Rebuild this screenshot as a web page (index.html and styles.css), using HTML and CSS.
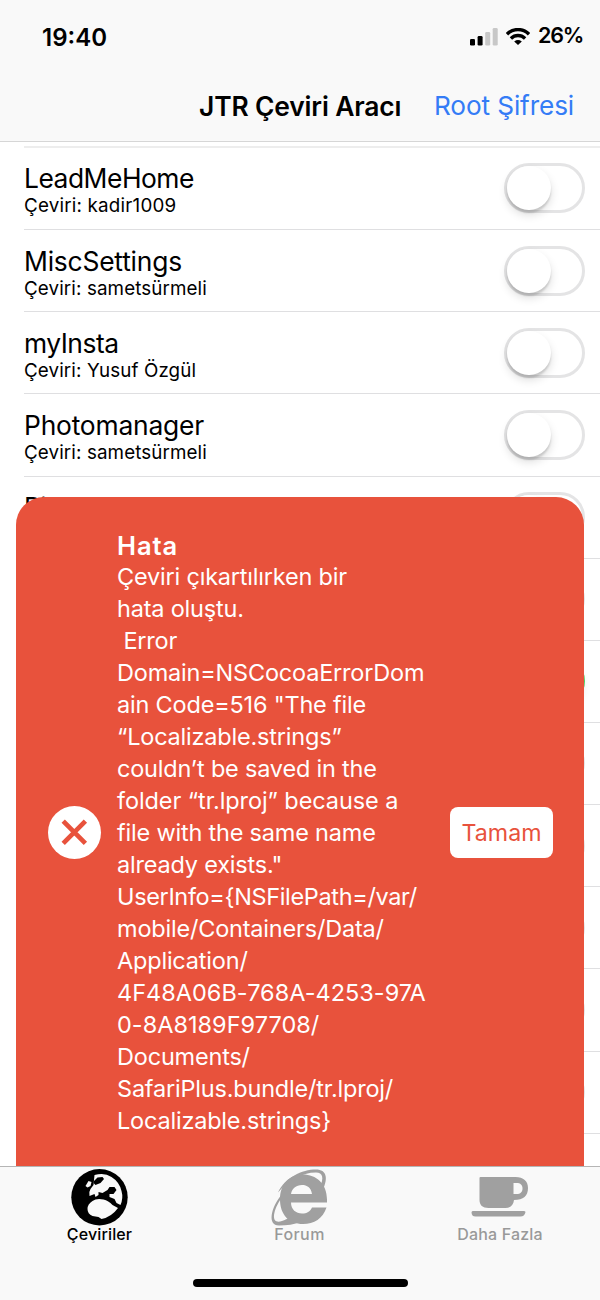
FILE: index.html
```
<!DOCTYPE html>
<html lang="tr">
<head>
<meta charset="utf-8">
<title>JTR Çeviri Aracı</title>
<link rel="stylesheet" href="styles.css">
</head>
<body>
<div class="phone">
  <header class="top">
    <div class="status">
      <span class="time">19:40</span>
      <svg class="signal" viewBox="0 0 28 18"><rect x="0" y="11" width="5" height="6.5" rx="1.3"/><rect x="7.6" y="8" width="5" height="9.5" rx="1.3"/><rect class="weak" x="15.2" y="4" width="5" height="13.5" rx="1.3"/><rect class="weak" x="22.7" y="0" width="5" height="17.5" rx="1.3"/></svg>
      <svg class="wifi" viewBox="0 0 24 17"><g fill="none" stroke="#000" stroke-width="3.4"><path d="M1 6.2C7.2 0 16.800 0 23 6.200"/><path d="M4.900 10.400C9 6.500 15 6.500 19.100 10.400"/></g><path d="M8.200 13.400Q12 10.500 15.800 13.400L12 17Z"/></svg>
      <span class="battery">26%</span>
    </div>
    <div class="nav"><h1 class="title">JTR Çeviri Aracı</h1><a class="action">Root Şifresi</a></div>
  </header>
  <main class="list">
    <div class="row"><div><div class="name">LeadMeHome</div><div class="by wide">Çeviri: kadir1009</div></div><span class="switch"></span></div>
    <div class="row"><div><div class="name loose">MiscSettings</div><div class="by">Çeviri: sametsürmeli</div></div><span class="switch"></span></div>
    <div class="row"><div><div class="name">myInsta</div><div class="by">Çeviri: Yusuf Özgül</div></div><span class="switch"></span></div>
    <div class="row"><div><div class="name loose">Photomanager</div><div class="by">Çeviri: sametsürmeli</div></div><span class="switch"></span></div>
    <div class="row"><div><div class="name">Pilbul</div></div><span class="switch"></span></div>
    <div class="row"><span class="switch"></span></div>
    <div class="row"><span class="switch on"></span></div>
    <div class="row"><span class="switch"></span></div>
    <div class="row"><span class="switch"></span></div>
    <div class="row"><span class="switch"></span></div>
    <div class="row"><span class="switch"></span></div>
    <div class="row"><span class="switch"></span></div>
    <div class="row"></div>
  </main>
  <section class="alert">
    <svg class="error" viewBox="0 0 54 54"><circle cx="26.500" cy="27.500" r="26.500" fill="#fff"/><path d="M15.200 16.200L37.400 38.400M37.400 16.200L15.200 38.400" stroke="#e8523c" stroke-width="4.700"/></svg>
    <div class="message">
      <h2 class="heading">Hata</h2>
      <p class="body">Çeviri çıkartılırken bir<br>hata oluştu.<br>&nbsp;Error<br>Domain=NSCocoaErrorDom<br>ain Code=516 "The file<br>“Localizable.strings”<br>couldn’t be saved in the<br><span class="folder">folder “tr.lproj” because a</span><br>file with the same name<br>already exists."<br><span class="info">UserInfo={NSFilePath=/var/</span><br>mobile/Containers/Data/<br>Application/<br><span class="id">4F48A06B-768A-4253-97A<br>0-8A8189F97708/</span><br>Documents/<br>SafariPlus.bundle/tr.lproj/<br>Localizable.strings}</p>
    </div>
    <button class="ok">Tamam</button>
  </section>
  <footer class="tabs">
    <div class="tab active">
      <svg class="icon" viewBox="0.5 0 58 58"><circle cx="29" cy="28.300" r="28.200"/><path fill="#f9f9f9" d="M24 6Q34 3 41 8Q49 13 51 22Q53 29 50 36L46 34L44 30L39 28V25H43L46 21L44 18H39L37 21L32 24L28 23V26L25 28L24 25L19 27Q18 23 20 20L23 16Z"/><path d="M23.500 12L27 8.500L32 8L33.500 10L30 14L25 16L23 14Z"/><path fill="#f9f9f9" d="M15 17L18 12L21 13L20 17L17 18.500Z"/><path fill="#f9f9f9" d="M17 40Q17 35 22 32Q26 29 33 30.500Q38 31.500 42 36L47.500 39Q41 48 31 50L28 48L22 47Q17 45 17 40Z"/></svg>
      <span>Çeviriler</span>
    </div>
    <div class="tab">
      <svg class="icon" viewBox="1 -0.5 58 58"><path fill-rule="evenodd" d="M33 5C46 5 57 14 57 30V33H21C21 40 26 44 32 44C37 44 40 42 42 38H56.500C53 49 44 54.500 33 54.500C19 54.500 10 45 10 30C10 15 19 5 33 5ZM21 24.500H42C41 18 37 15.500 32 15.500C26 15.500 22 19 21 24.500Z"/><path d="M8 23C15 8 32 0 46 0C57 0 58 9 53 20L50 17C54 9 53 3 46 3C32 3 18 11 8 23ZM11 29C3 41 2 51 7 52C11 53 19 49 25 44L31 52C24 55 17 56 9 56C-3 56 1 38 11 26Z"/></svg>
      <span class="forum">Forum</span>
    </div>
    <div class="tab">
      <svg class="icon" viewBox="0.5 0 58 58"><path fill-rule="evenodd" d="M10 8H45C53 8 57.500 12 57.500 19C57.500 27 53 31 43.500 31C43 36 40 39 35 39H18C12 39 9 36 9 31V9Q9 8 10 8ZM43 14V25H46C50 25 52 23 52 19.500C52 16 50 14 46 14Z"/><path d="M2 42H53Q55 42 55 43Q54 47.500 50 47.500H5Q1 47.500 1 43Z"/></svg>
      <span class="more">Daha Fazla</span>
    </div>
    <div class="home"></div>
  </footer>
</div>
</body>
</html>
```
FILE: styles.css
```
* { box-sizing: border-box; }
body { margin: 0; font-family: Inter, "Liberation Sans", sans-serif; color: #000; background: #fff; }
h1, h2, p { margin: 0; }
.phone { position: relative; display: flex; flex-direction: column; width: 600px; height: 1300px; overflow: hidden; }
.top { flex: none; height: 142px; background: #f9f9f9; border-bottom: 1px solid #d6d6d6; }
.status { display: flex; height: 73px; padding-left: 42px; }
.time { width: 428px; padding-top: 23px; font-size: 24px; line-height: 30px; font-weight: 600; }
.signal { width: 28px; height: 18px; margin-top: 28px; }
.weak { fill: #c8c8c8; }
.wifi { width: 24px; height: 17px; margin: 28px 8px 0; }
.battery { padding-top: 21px; font-size: 21.500px; line-height: 28px; font-weight: 600; letter-spacing: -1.200px; }
.nav { display: flex; height: 68px; padding-left: 199px; line-height: 66px; white-space: nowrap; }
.title { width: 235px; font-size: 26.400px; font-weight: 600; letter-spacing: -0.150px; }
.action { font-size: 26.200px; color: #347cf6; letter-spacing: -0.120px; }
.list { flex: 1; min-height: 0; overflow: hidden; padding: 4px 0 0 24px; }
.list::before { content: ""; display: block; height: 2px; background: #ededed; }
.row { display: flex; justify-content: space-between; height: 82.150px; padding: 15.400px 15px 0 0; border-bottom: 1px solid #dfdfe1; white-space: nowrap; }
.name { height: 32px; font-size: 26.400px; line-height: 30.500px; letter-spacing: -0.480px; }
.loose { letter-spacing: -0.200px; }
.by { font-size: 18.800px; line-height: 22.600px; letter-spacing: 0.110px; }
.wide { letter-spacing: 0.200px; }
.switch { width: 81px; height: 50px; border: 3px solid #e4e4e5; border-radius: 25px; margin-left: auto; }
.switch::before { content: ""; display: block; width: 43.500px; height: 44px; border-radius: 50%; background: #fff; box-shadow: 0 5px 10px #0002, 0 3px 2px #0002; }
.on { border-color: #4cd964; background: #4cd964; }
.on::before { margin-left: auto; }
.alert { position: absolute; left: 16px; top: 497px; width: 568px; height: 670px; display: flex; align-items: center; padding-left: 32px; border-radius: 28px 28px 0 0; background: #e8523c; color: #fff; }
.error { flex: none; width: 54px; height: 54px; }
.message { flex: none; width: 347.500px; padding: 4px 0 0 15px; }
.heading { font-size: 25.500px; line-height: 30px; font-weight: 600; letter-spacing: 0.900px; }
.body { font-size: 23.500px; line-height: 32px; letter-spacing: -0.200px; white-space: nowrap; }
.folder { letter-spacing: -0.080px; }
.info { letter-spacing: -0.350px; }
.id { letter-spacing: 0.010px; }
.ok { width: 103px; height: 51px; padding: 1px 0 0 1px; border: 0; border-radius: 8px; background: #fff; color: #e8523c; font: 23.200px Inter, sans-serif; }
.tabs { position: relative; flex: none; display: grid; grid-template-columns: repeat(3, 200px); height: 134px; padding-top: 2px; background: #f9f9f9; border-top: 1px solid #b5b5b5; z-index: 1; }
.tab { display: flex; flex-direction: column; align-items: center; padding-right: 1px; color: #999; fill: #a0a0a0; font-size: 16px; line-height: 20px; font-weight: 500; letter-spacing: 0.150px; }
.forum { letter-spacing: 0.400px; }
.more { padding-left: 1px; }
.active { color: #000; fill: #000; }
.icon { width: 58px; height: 58px; margin-bottom: -3px; overflow: visible; }
.home { position: absolute; left: 193px; bottom: 13px; width: 215px; height: 8px; border-radius: 4px; background: #000; }
```
